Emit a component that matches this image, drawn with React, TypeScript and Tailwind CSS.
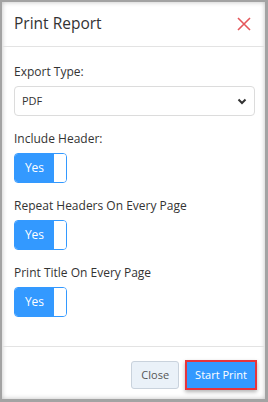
import React, { useState } from "react";

const font = { fontFamily: '"Open Sans", "Noto Sans", sans-serif' };

const Toggle = ({ on, onClick }: { on: boolean; onClick: () => void }) => (
  <button
    onClick={onClick}
    className="flex h-[30px] w-[53px] overflow-hidden rounded-[4px] border border-[#3399ff] bg-white"
  >
    <span className="flex h-full w-[39px] items-center justify-center bg-[#3399ff] text-[12px] text-white">
      {on ? "Yes" : "No"}
    </span>
    <span className="h-full flex-1 bg-white" />
  </button>
);

const App = () => {
  const [header, setHeader] = useState(true);
  const [repeat, setRepeat] = useState(true);
  const [title, setTitle] = useState(true);

  return (
    <div
      className="h-[402px] w-[268px] bg-[#a3a3a3] pb-[3px] pl-[2px] pr-[3px] pt-[2px]"
      style={font}
    >
      <div className="flex h-full flex-col bg-white shadow-[inset_0_0_5px_rgba(0,0,0,0.25)]">
        {/* Header */}
        <div className="flex h-[45px] items-center justify-between border-b border-[#e3e3e3] pl-[12px] pr-[14px]">
          <span className="text-[15.5px] text-[#333]">Print Report</span>
          <button className="text-[#e5575b]">
            <svg width="14" height="14" viewBox="0 0 14 14" fill="none" stroke="currentColor" strokeWidth="1.6">
              <path d="M1 1L13 13M13 1L1 13" />
            </svg>
          </button>
        </div>

        {/* Body */}
        <div className="flex flex-1 flex-col pl-[12px] pr-[10px] pt-[15px] text-[12px] text-[#333]">
          <label className="mb-[4px] leading-[20px]">Export Type:</label>
          <div className="relative h-[30px] w-full rounded-[4px] border border-[#dcdcdc]">
            <select className="h-full w-full appearance-none bg-transparent pl-[7px] text-[11px] text-[#333] outline-none">
              <option>PDF</option>
              <option>Excel</option>
              <option>CSV</option>
            </select>
            <svg
              className="pointer-events-none absolute right-[7px] top-[11px]"
              width="10"
              height="7"
              viewBox="0 0 10 7"
              fill="none"
              stroke="#333"
              strokeWidth="2"
            >
              <path d="M1.5 1.5L5 5L8.5 1.5" />
            </svg>
          </div>

          <label className="mb-[4px] mt-[13px] leading-[20px]">Include Header:</label>
          <Toggle on={header} onClick={() => setHeader(!header)} />

          <label className="mb-[4px] mt-[13px] leading-[20px]">Repeat Headers On Every Page</label>
          <Toggle on={repeat} onClick={() => setRepeat(!repeat)} />

          <label className="mb-[4px] mt-[13px] leading-[20px]">Print Title On Every Page</label>
          <Toggle on={title} onClick={() => setTitle(!title)} />
        </div>

        {/* Footer */}
        <div className="flex h-[53px] items-start justify-end gap-[6px] border-t border-[#e3e3e3] pr-[8px] pt-[14px]">
          <button className="h-[28px] rounded-[3px] border border-[#c9d2dc] bg-[#eaf1f8] px-[9px] text-[11px] text-[#555]">
            Close
          </button>
          <button className="-mt-[1px] h-[30px] border-2 border-[#e8343b] bg-[#3399ff] px-[8px] text-[11px] text-white shadow-[0_2px_4px_rgba(0,0,0,0.3)]">
            Start Print
          </button>
        </div>
      </div>
    </div>
  );
};

export default App;
